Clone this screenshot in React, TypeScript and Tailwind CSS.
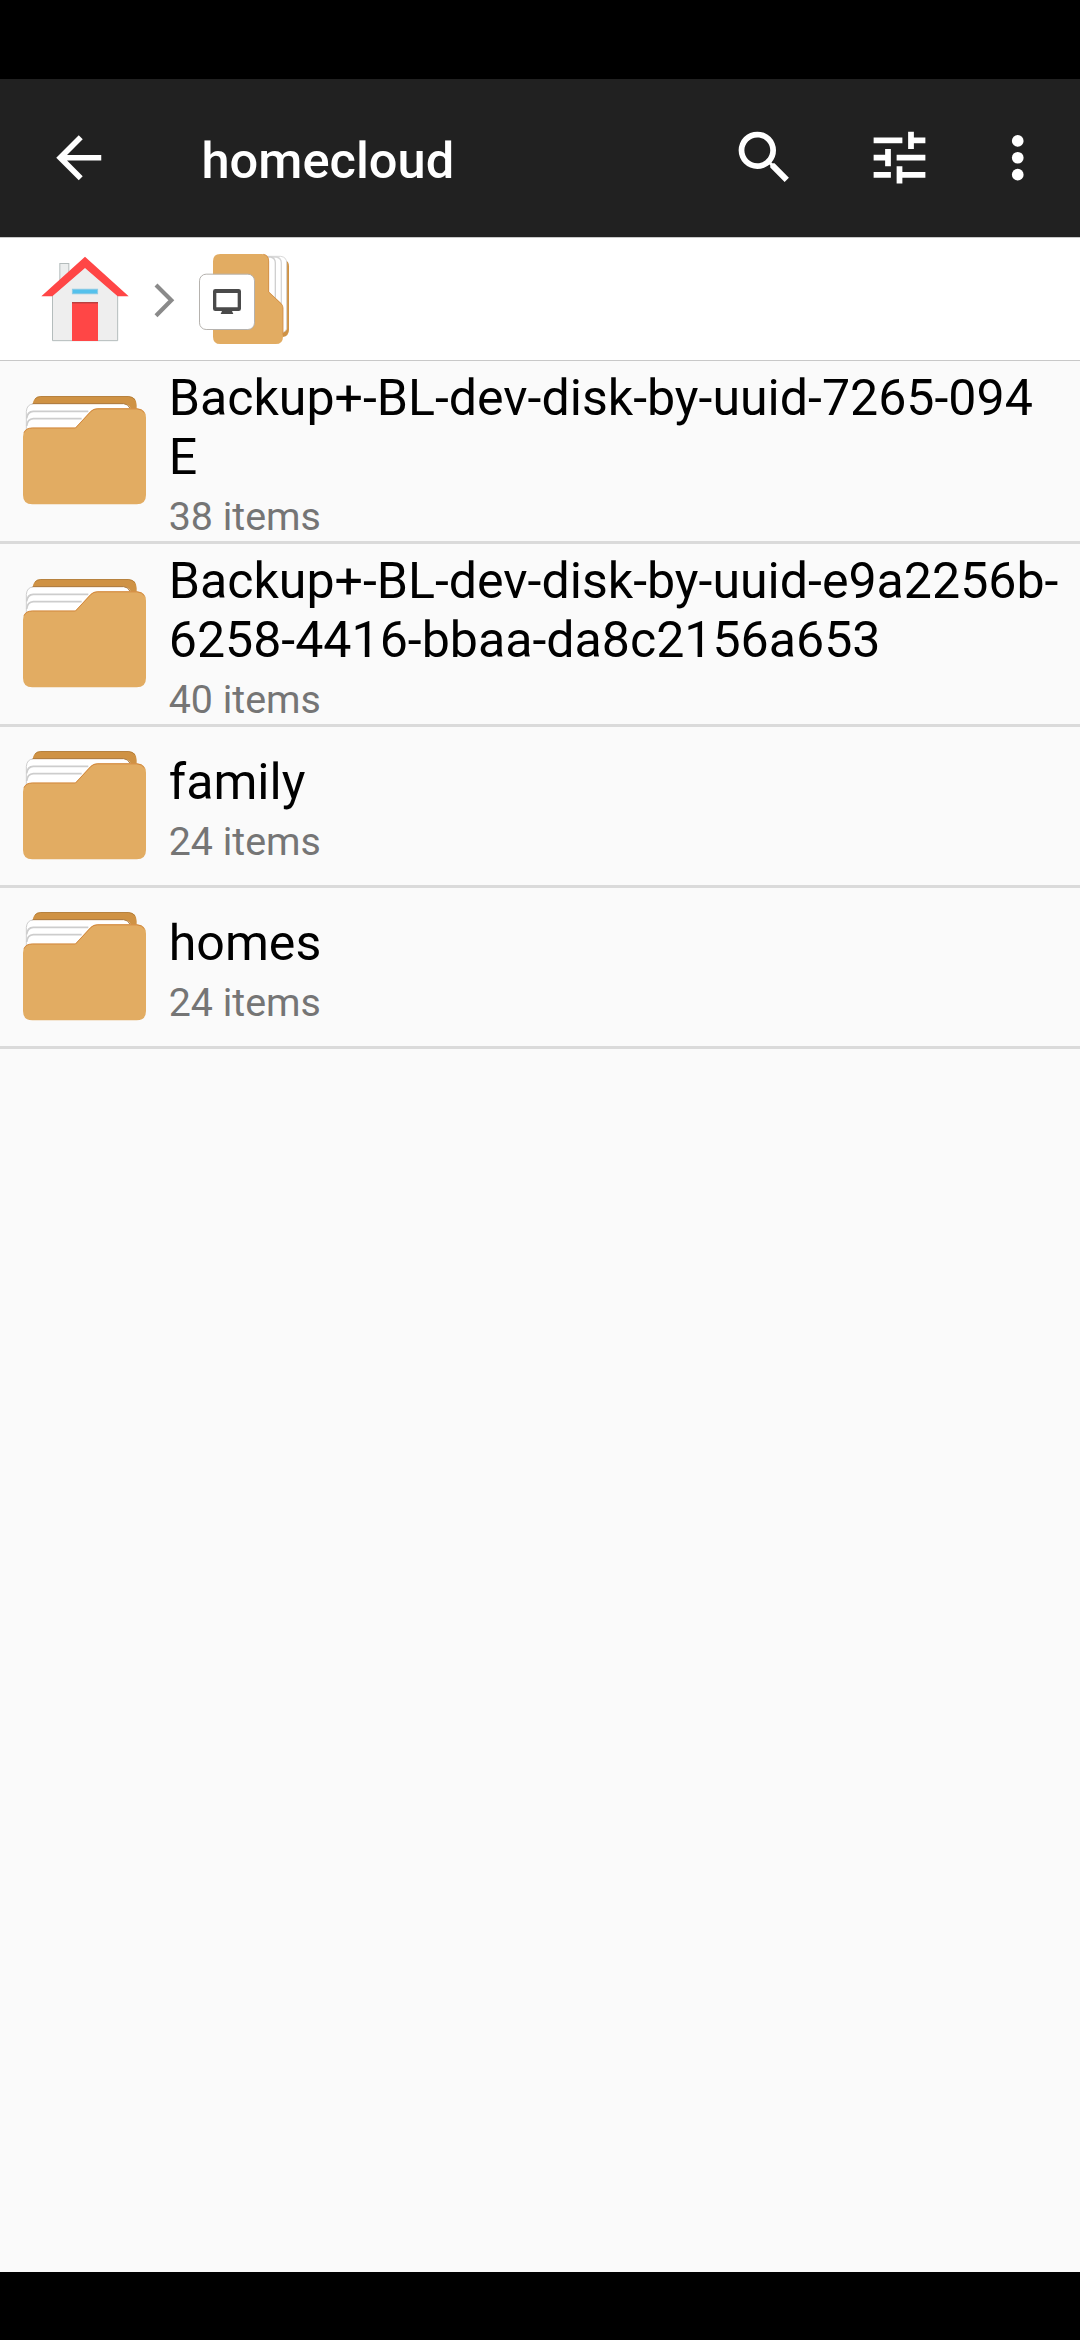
import React from "react";

type Entry = { lines: string[]; count: number };

const entries: Entry[] = [
  { lines: ["Backup+-BL-dev-disk-by-uuid-7265-094", "E"], count: 38 },
  { lines: ["Backup+-BL-dev-disk-by-uuid-e9a2256b-", "6258-4416-bbaa-da8c2156a653"], count: 40 },
  { lines: ["family"], count: 24 },
  { lines: ["homes"], count: 24 },
];

function BackIcon() {
  return (
    <svg className="h-[67.5px] w-[67.5px]" viewBox="0 0 24 24" fill="white">
      <path d="M20 11H7.83l5.59-5.59L12 4l-8 8 8 8 1.41-1.41L7.83 13H20v-2z" />
    </svg>
  );
}

function SearchIcon() {
  return (
    <svg className="h-[69px] w-[69px]" viewBox="0 0 24 24" fill="white">
      <path d="M15.5 14h-.79l-.28-.27A6.471 6.471 0 0 0 16 9.5 6.5 6.5 0 1 0 9.5 16c1.61 0 3.09-.59 4.23-1.57l.27.28v.79l5 4.99L20.49 19l-4.99-5zm-6 0C7.01 14 5 11.99 5 9.5S7.01 5 9.5 5 14 7.01 14 9.5 11.99 14 9.5 14z" />
    </svg>
  );
}

function TuneIcon() {
  return (
    <svg className="h-[69px] w-[69px]" viewBox="0 0 24 24" fill="white">
      <path d="M3 17v2h6v-2H3zM3 5v2h10V5H3zm10 16v-2h8v-2h-8v-2h-2v6h2zM7 9v2H3v2h4v2h2V9H7zm14 4v-2H11v2h10zm-6-4h2V7h4V5h-4V3h-2v6z" />
    </svg>
  );
}

function MoreIcon() {
  return (
    <svg className="h-[67.5px] w-[67.5px]" viewBox="0 0 24 24" fill="white">
      <circle cx="12" cy="6" r="2.08" />
      <circle cx="12" cy="12" r="2.08" />
      <circle cx="12" cy="18" r="2.08" />
    </svg>
  );
}

function HomeIcon() {
  return (
    <svg className="h-[90px] w-[90px]" viewBox="60 60 270 270">
      <rect x="119.500" y="85.500" width="27" height="60" fill="#eceeee" stroke="#b4bcbc" strokeWidth="3" />
      <path d="M97.500 180L195 96l98 84v137H97.500z" fill="#eeeeee" stroke="#b4bcbc" strokeWidth="3" />
      <path d="M195 65L326 184h-33L195 99 97 184H64z" fill="#ff4646" />
      <rect x="157" y="162.500" width="76" height="14" fill="#54c1ec" stroke="#8fcbe4" strokeWidth="2.500" />
      <rect x="156" y="201" width="78" height="117" fill="#ff4646" />
      <rect x="156" y="201" width="78" height="3" fill="#b84040" />
      <rect x="156" y="204" width="78" height="3" fill="#e04343" />
    </svg>
  );
}

function ChevronIcon() {
  return (
    <svg className="h-[35px] w-[21px]" viewBox="42 144 63 105">
      <path d="M48 150l46 46-46 46" fill="none" stroke="#8a8a8a" strokeWidth="12.500" />
    </svg>
  );
}

function NetworkFolderIcon() {
  return (
    <svg className="h-[93px] w-[92px]" viewBox="174 51 276 279">
      <path d="M400 76h34q13 2 13 18v190q0 18-18 22h-29z" fill="#cf9244" />
      <path d="M380 64h42q18 2 18 20v196q0 8-10 12h-50z" fill="#fff" stroke="#d0d0d0" strokeWidth="2.500" />
      <path d="M380 66h29q15 3 15 18v180h-44z" fill="#fff" stroke="#d6d6d6" strokeWidth="4" />
      <path d="M380 66h12q14 3 14 18v180h-26z" fill="#fff" stroke="#d0d0d0" strokeWidth="4" />
      <path d="M241 57h124q22 0 22 22v91l36 34q6 6 6 14v87q0 22-22 22H241q-22 0-22-22V79q0-22 22-22z" fill="#e2ac62" />
      <path d="M370 58q16 3 16 21v92l37 35q6 5 6 13v82" fill="none" stroke="#d18d45" strokeWidth="2.500" />
      <rect x="178.500" y="117.500" width="165" height="166" rx="20" fill="#fff" stroke="#b5b2ae" strokeWidth="3" />
      <path d="M226 162h70q7 0 7 7v52q0 7-7 7h-20l4 9h-38l4-9h-20q-7 0-7-7v-52q0-7 7-7zm3 12v43h64v-43z" fill="#4a4a4a" fillRule="evenodd" />
    </svg>
  );
}

function FolderIcon() {
  return (
    <svg className="mb-[1.5px] h-[111px] w-[126px] shrink-0" viewBox="66 45 378 333">
      <path d="M98 100V72q4-22 24-23h264q24 2 24 26v30z" fill="#cf9244" />
      <path d="M104 58q6-8 18-8.500h264q12 1 19 10" fill="none" stroke="#b07a35" strokeWidth="2.500" />
      <path d="M79 150V94q2-22 22-23h270q17 1 21 15v64z" fill="#fff" />
      <path d="M79 150V94q2-21 20-22" fill="none" stroke="#cfcfcf" strokeWidth="3" />
      <path d="M98 71h273q14 1 19 14" fill="none" stroke="#a9763a" strokeWidth="3" />
      <path d="M80 115q2-20 20-21h165M80 138q2-21 20-22h145" fill="none" stroke="#cdcdcd" strokeWidth="5" />
      <path d="M97 143h129l46-50q8-8 20-8h118q28 2 28 28v232q0 28-28 28H97q-28 0-28-28V171q0-28 28-28z" fill="#e2ac62" />
      <path d="M72 158q6-14 25-14h129.500l46-49.500q8-8 20-8h118q16 1 23 12" fill="none" stroke="#d2883f" strokeWidth="3" />
    </svg>
  );
}

function Row({ entry }: { entry: Entry }) {
  const tall = entry.lines.length > 1;
  return (
    <li
      className={
        "flex items-center border-b-[3px] border-[#dadada] pl-[22px] pr-[17px] " +
        (tall ? "h-[183px]" : "h-[161px]")
      }
    >
      <FolderIcon />
      <div className={"ml-[20.75px] flex-1 " + (tall ? "pt-[8px]" : "pt-[6px]")}>
        <p className="text-[50.100px] leading-[59px] whitespace-nowrap text-black">
          {entry.lines.map((line) => (
            <span key={line} className="block">
              {line}
            </span>
          ))}
        </p>
        <p className="mt-[6px] text-[39.375px] leading-[48px] text-[#757575]">{entry.count} items</p>
      </div>
    </li>
  );
}

export default function App() {
  return (
    <div className="flex h-[2340px] w-[1080px] flex-col bg-[#fafafa] font-[Roboto,sans-serif]">
      <div className="h-[79px] bg-black" />
      <header className="flex h-[158px] items-center bg-[#212121] pl-[45px]">
        <BackIcon />
        <h1 className="ml-[89px] flex-1 pt-[5px] text-[50.625px] font-medium text-white">homecloud</h1>
        <div className="flex items-center pb-[1px]">
          <SearchIcon />
          <div className="ml-[66px]">
            <TuneIcon />
          </div>
          <div className="mr-[28.250px] ml-[50.500px] pt-[1px]">
            <MoreIcon />
          </div>
        </div>
      </header>
      <nav className="flex h-[124px] items-center border-y border-[#c8c8c8] bg-white pl-[40px]">
        <div className="pt-[2px]">
          <HomeIcon />
        </div>
        <div className="ml-[24px] pt-[3px]">
          <ChevronIcon />
        </div>
        <div className="ml-[23px] pb-[1px]">
          <NetworkFolderIcon />
        </div>
      </nav>
      <ul className="flex-1">
        {entries.map((entry) => (
          <Row key={entry.lines.join("")} entry={entry} />
        ))}
      </ul>
      <div className="h-[68px] bg-black" />
    </div>
  );
}
